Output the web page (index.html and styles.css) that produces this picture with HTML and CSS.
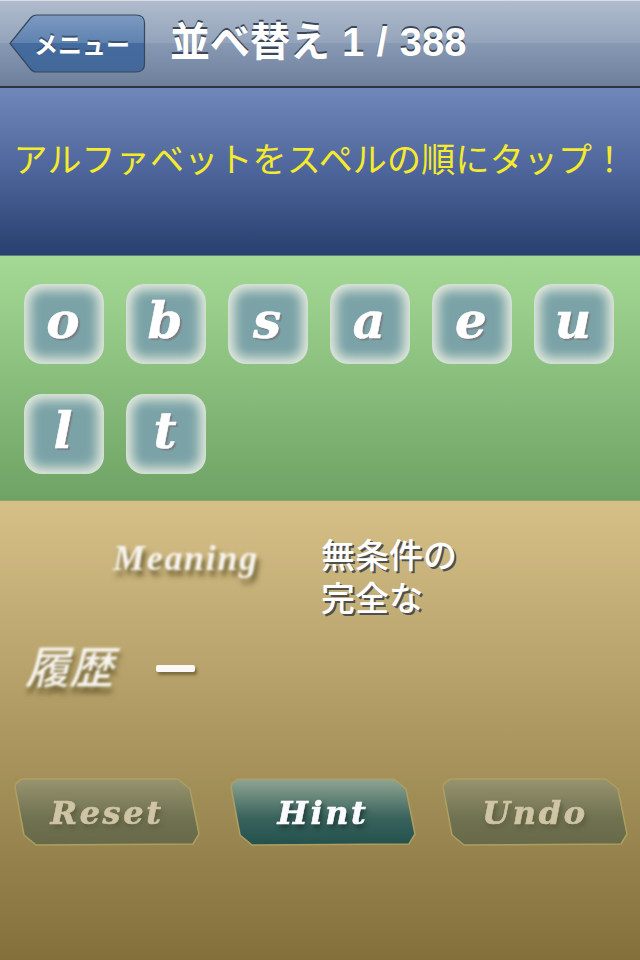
FILE: index.html
```html
<!DOCTYPE html>
<html lang="ja">
<head>
  <meta charset="UTF-8" />
  <title>並べ替え</title>
  <link rel="stylesheet" href="styles.css">
</head>
<body>

  <!-- ナビバー -->
  <header class="navbar">
    <a class="back" href="#">
      <svg class="back-shape" width="138" height="60" viewBox="0 0 138 60">
        <defs>
          <linearGradient id="backFill" x1="0" y1="0" x2="0" y2="1">
            <stop offset="0" stop-color="#7d9ac2"/>
            <stop offset="0.49" stop-color="#5f82b0"/>
            <stop offset="0.5" stop-color="#456c9f"/>
            <stop offset="1" stop-color="#436798"/>
          </linearGradient>
        </defs>
        <path d="M1 29.500 L21.500 4 Q24 1 28 1 L127 1 Q135.500 1 135.500 9 L135.500 50 Q135.500 58 127 58 L28 58 Q24 58 21.500 55 Z" fill="url(#backFill)" stroke="#34495f" stroke-width="1.200"/>
      </svg>
      <span class="back-label">メニュー</span>
    </a>
    <h1 class="nav-title">並べ替え 1 / 388</h1>
  </header>

  <!-- 説明 -->
  <section class="prompt">
    <p>アルファベットをスペルの順にタップ！</p>
  </section>

  <!-- 文字タイル -->
  <section class="letters">
    <div class="tile">o</div>
    <div class="tile">b</div>
    <div class="tile">s</div>
    <div class="tile">a</div>
    <div class="tile">e</div>
    <div class="tile">u</div>
    <div class="tile">l</div>
    <div class="tile">t</div>
  </section>

  <!-- 下のパネル -->
  <section class="panel">
    <div class="meaning-row">
      <div class="meaning-label">Meaning</div>
      <div class="meaning-text">無条件の<br>完全な</div>
    </div>

    <div class="history-row">
      <div class="history-label">履歴</div>
      <div class="history-dash"></div>
    </div>

    <svg class="defs" width="0" height="0">
      <defs>
        <linearGradient id="offFill" x1="0" y1="0" x2="0" y2="1">
          <stop offset="0" stop-color="#98946f"/>
          <stop offset="0.6" stop-color="#6f7150"/>
          <stop offset="1" stop-color="#676a49"/>
        </linearGradient>
        <linearGradient id="onFill" x1="0" y1="0" x2="0" y2="1">
          <stop offset="0" stop-color="#90a592"/>
          <stop offset="0.6" stop-color="#38625c"/>
          <stop offset="1" stop-color="#24514c"/>
        </linearGradient>
        <path id="actionShape" d="M1 9 Q1 5 8 1 L164 1 L176 11 L185 56 L179 66 L22 67 L10 57 Z"/>
      </defs>
    </svg>

    <div class="actions">
      <button class="action off">
        <svg class="action-shape" width="186" height="68"><use href="#actionShape"/></svg>
        <span>Reset</span>
      </button>
      <button class="action on">
        <svg class="action-shape" width="186" height="68"><use href="#actionShape"/></svg>
        <span>Hint</span>
      </button>
      <button class="action off">
        <svg class="action-shape" width="186" height="68"><use href="#actionShape"/></svg>
        <span>Undo</span>
      </button>
    </div>
  </section>

</body>
</html>
```

FILE: styles.css
```css
html, body {
  margin: 0;
  padding: 0;
}

body {
  width: 640px;
  height: 960px;
  overflow: hidden;
  font-family: "Liberation Sans", "Noto Sans CJK JP", sans-serif;
  color: white;
}

/* NAVBAR */
.navbar {
  height: 85px;
  display: flex;
  align-items: center;
  gap: 25px;
  padding-left: 9px;
  background: linear-gradient(#b0bccd, #93a3ba 50%, #8799b3 50%, #6d7f9b);
  border-top: 1px solid #d8dde5;
  border-bottom: 2px solid #2d3440;
}

.back {
  position: relative;
  width: 138px;
  height: 60px;
  display: flex;
  align-items: center;
  justify-content: center;
  text-decoration: none;
  color: white;
  flex-shrink: 0;
}

.back-shape {
  position: absolute;
  top: 0;
  left: 0;
}

.back-label {
  position: relative;
  padding-left: 8px;
  font-size: 24px;
  font-weight: bold;
  text-shadow: 0 -2px 0 #3a5273;
}

.nav-title {
  margin: 0 0 9px -2px;
  font-size: 40px;
  font-weight: bold;
  word-spacing: 1px;
  text-shadow: 0 -2px 0 #3b4658;
  white-space: nowrap;
}

/* PROMPT */
.prompt {
  height: 168px;
  box-sizing: border-box;
  padding-bottom: 28px;
  display: flex;
  align-items: center;
  justify-content: center;
  background: linear-gradient(#6f87b9, #4d659a 50%, #27406f);
  border-bottom: 1px solid #5d7a80;
}

.prompt p {
  margin: 0;
  font-size: 34px;
  letter-spacing: 0.2px;
  color: #f5ea2c;
  white-space: nowrap;
}

/* LETTERS */
.letters {
  height: 245px;
  box-sizing: border-box;
  padding: 28px 24px 0;
  display: grid;
  grid-template-columns: repeat(6, 80px);
  grid-auto-rows: 80px;
  column-gap: 22px;
  row-gap: 30px;
  background: linear-gradient(#a4d995, #6fa365);
  border-bottom: 1px solid #8f9f6e;
}

.tile {
  border-radius: 18px;
  background: #7aa2a7;
  box-shadow: inset 0 0 12px 6px #e4ebdc;
  display: flex;
  align-items: center;
  justify-content: center;
  font-family: "DejaVu Serif", serif;
  font-weight: bold;
  font-style: italic;
  font-size: 50px;
  line-height: 1;
  padding: 0 2px 6px 0;
  box-sizing: border-box;
  -webkit-text-stroke: 0.5px white;
  text-shadow: 2px 2px 1px #7b7f84;
}

/* PANEL */
.panel {
  height: 459px;
  box-sizing: border-box;
  padding-top: 34px;
  background: linear-gradient(#d6c088, #83703a);
}

.meaning-row {
  display: flex;
  gap: 61px;
  padding-left: 113px;
}

.meaning-label {
  width: 147px;
  margin-top: 3px;
  font-family: "Liberation Serif", serif;
  font-weight: bold;
  font-style: italic;
  font-size: 36px;
  line-height: 40px;
  letter-spacing: 1.700px;
  color: #f6f4ee;
  filter: blur(0.8px);
  text-shadow: 3px 6px 5px #6e6034;
  white-space: nowrap;
}

.meaning-text {
  font-size: 34px;
  line-height: 43px;
  font-weight: 500;
  text-shadow: 2px 2px 0 #4f4f50;
  white-space: nowrap;
}

.history-row {
  display: flex;
  align-items: center;
  gap: 39px;
  margin-top: 20px;
  padding-left: 29px;
}

.history-label {
  font-size: 44px;
  font-weight: 500;
  line-height: 56px;
  transform: skewX(-14deg);
  color: #f7f5ee;
  filter: blur(0.8px);
  text-shadow: 3px 6px 5px #6e6034;
}

.history-dash {
  width: 39px;
  height: 7px;
  margin-top: -1px;
  border-radius: 2px;
  background: #faf9f8;
  box-shadow: 2px 3px 3px #7c6d3d;
}

/* ACTIONS */
.defs {
  position: absolute;
}

.actions {
  display: flex;
  gap: 28px;
  margin-top: 81px;
  padding-left: 14px;
}

.action {
  position: relative;
  width: 186px;
  height: 68px;
  padding: 2px 0 0;
  font-family: "DejaVu Serif", serif;
  font-weight: bold;
  font-style: italic;
  font-size: 32px;
  letter-spacing: 2.600px;
  border: none;
  background: none;
  -webkit-text-stroke: 0.6px currentColor;
}

.action-shape {
  position: absolute;
  top: 0;
  left: 0;
  stroke: #ad9f63;
  stroke-width: 1.500;
  stroke-linejoin: round;
}

.action span {
  position: relative;
  filter: blur(0.4px);
}

.action.off {
  color: #cfc5a5;
}

.action.off .action-shape {
  fill: url(#offFill);
}

.action.off span {
  text-shadow: 2px 4px 5px #5c5c3f;
}

.action.on {
  margin: 0 -2px 0 2px;
  color: #fbfbff;
}

.action.on .action-shape {
  fill: url(#onFill);
}

.action.on span {
  text-shadow: 2px 4px 5px #1d3835;
}
```
